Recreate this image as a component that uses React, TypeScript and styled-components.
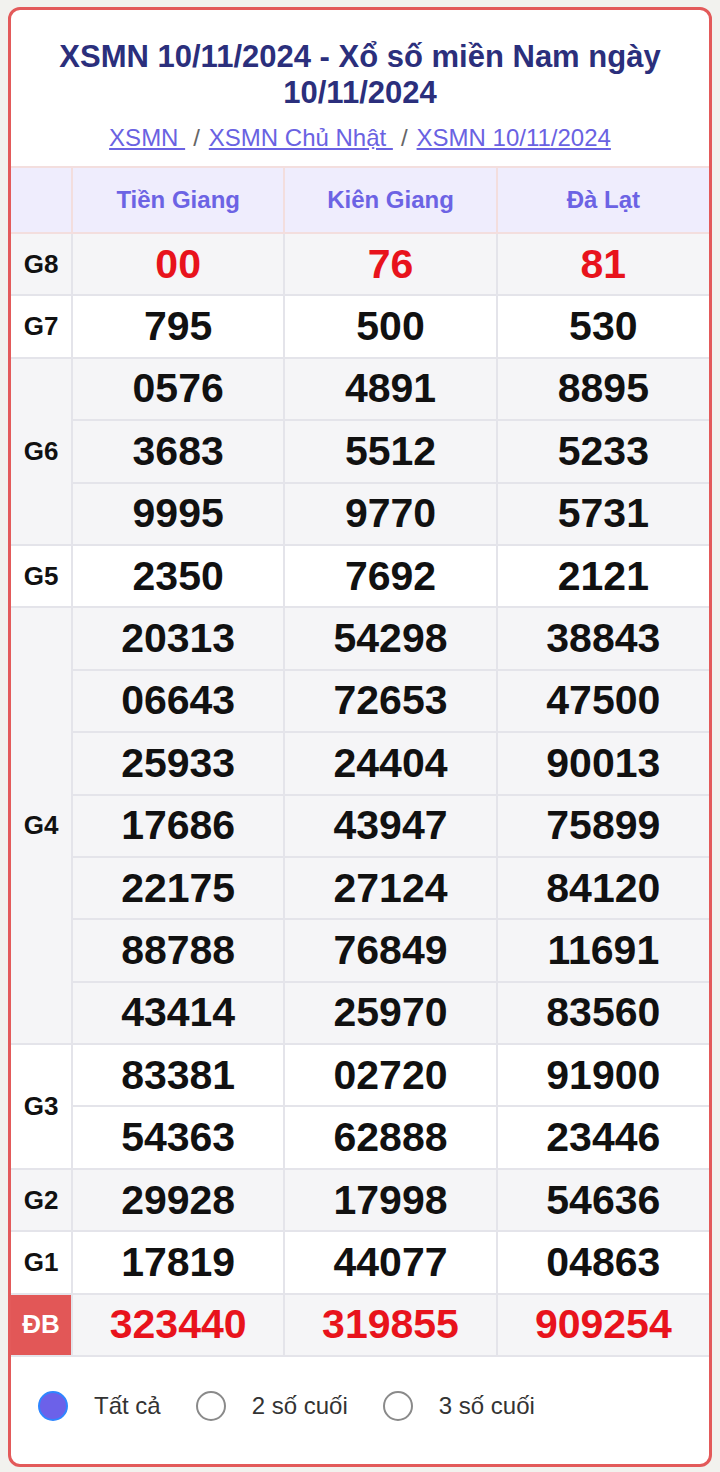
import React, { useState } from "react";
import styled, { createGlobalStyle } from "styled-components";

const Global = createGlobalStyle`
  html, body { margin: 0; padding: 0; background: #f2f2ee; }
  body { font-family: "Liberation Sans", Arial, sans-serif; }
  * { box-sizing: border-box; }
`;

const Card = styled.div`
  margin: 7px 8px 6px 8px;
  border: 3px solid #e35a5a;
  border-radius: 12px;
  background: #ffffff;
  overflow: hidden;
`;

const Head = styled.div`
  padding: 29px 20px 14px;
  text-align: center;
`;

const Title = styled.h1`
  margin: 0;
  font-size: 31px;
  line-height: 36px;
  font-weight: 700;
  color: #2b2f7c;
`;

const Crumbs = styled.div`
  margin-top: 13px;
  font-size: 24px;
  line-height: 28px;
  color: #555;
`;

const Crumb = styled.a`
  color: #6a62e2;
  text-decoration: underline;
`;

const Sep = styled.span`
  color: #666;
  margin: 0 9px 0 8px;
`;

const Table = styled.table`
  width: 100%;
  border-collapse: collapse;
  table-layout: fixed;
`;

const HeadCell = styled.th`
  height: 66px;
  background: #efedfd;
  border: 2px solid #f3dede;
  color: #6c63e4;
  font-size: 24px;
  font-weight: 700;
  text-align: center;
  &:first-child { border-left: none; }
  &:last-child { border-right: none; }
`;

const Row = styled.tr<{ $alt: boolean }>`
  background: ${(p) => (p.$alt ? "#f5f5f7" : "#ffffff")};
`;

const LabelCell = styled.td<{ $special?: boolean }>`
  border: 2px solid #e4e4ea;
  border-left: none;
  text-align: center;
  font-size: 26px;
  font-weight: 700;
  color: ${(p) => (p.$special ? "#ffffff" : "#111")};
  background: ${(p) => (p.$special ? "#e25757" : "transparent")};
`;

const NumCell = styled.td<{ $red?: boolean; $first: boolean; $last: boolean }>`
  height: 62.4px;
  padding: 0;
  border-left: 2px solid #e4e4ea;
  border-right: ${(p) => (p.$last ? "none" : "2px solid #e4e4ea")};
  border-top: 2px solid ${(p) => (p.$first ? "#e4e4ea" : "#ececf0")};
  border-bottom: 2px solid #e4e4ea;
  text-align: center;
  font-size: 41px;
  font-weight: 700;
  color: ${(p) => (p.$red ? "#e8131c" : "#111")};
`;

const Radios = styled.div`
  display: flex;
  align-items: center;
  padding: 34px 27px 43px;
`;

const RadioItem = styled.label`
  display: flex;
  align-items: center;
  gap: 26px;
  margin-right: 35px;
  font-size: 24px;
  color: #333;
  cursor: pointer;
`;

const Dot = styled.span<{ $on: boolean }>`
  width: 30px;
  height: 30px;
  border-radius: 50%;
  border: 2px solid ${(p) => (p.$on ? "#2f86ff" : "#8a8a8a")};
  background: ${(p) => (p.$on ? "#6c61e9" : "#fff")};
  flex-shrink: 0;
`;

type Prize = { label: string; rows: string[][]; red?: boolean; special?: boolean };

const prizes: Prize[] = [
  { label: "G8", rows: [["00", "76", "81"]], red: true },
  { label: "G7", rows: [["795", "500", "530"]] },
  {
    label: "G6",
    rows: [
      ["0576", "4891", "8895"],
      ["3683", "5512", "5233"],
      ["9995", "9770", "5731"],
    ],
  },
  { label: "G5", rows: [["2350", "7692", "2121"]] },
  {
    label: "G4",
    rows: [
      ["20313", "54298", "38843"],
      ["06643", "72653", "47500"],
      ["25933", "24404", "90013"],
      ["17686", "43947", "75899"],
      ["22175", "27124", "84120"],
      ["88788", "76849", "11691"],
      ["43414", "25970", "83560"],
    ],
  },
  {
    label: "G3",
    rows: [
      ["83381", "02720", "91900"],
      ["54363", "62888", "23446"],
    ],
  },
  { label: "G2", rows: [["29928", "17998", "54636"]] },
  { label: "G1", rows: [["17819", "44077", "04863"]] },
  { label: "ĐB", rows: [["323440", "319855", "909254"]], red: true, special: true },
];

const options = ["Tất cả", "2 số cuối", "3 số cuối"];

export default function App() {
  const [sel, setSel] = useState(0);
  return (
    <>
      <Global />
      <Card>
        <Head>
          <Title>XSMN 10/11/2024 - Xổ số miền Nam ngày 10/11/2024</Title>
          <Crumbs>
            <Crumb href="#">XSMN </Crumb>
            <Sep>/</Sep>
            <Crumb href="#">XSMN Chủ Nhật </Crumb>
            <Sep>/</Sep>
            <Crumb href="#">XSMN 10/11/2024</Crumb>
          </Crumbs>
        </Head>
        <Table>
          <colgroup>
            <col style={{ width: 61 }} />
            <col />
            <col />
            <col />
          </colgroup>
          <thead>
            <tr>
              <HeadCell />
              <HeadCell>Tiền Giang</HeadCell>
              <HeadCell>Kiên Giang</HeadCell>
              <HeadCell>Đà Lạt</HeadCell>
            </tr>
          </thead>
          <tbody>
            {prizes.map((p, pi) =>
              p.rows.map((r, ri) => (
                <Row key={p.label + ri} $alt={pi % 2 === 0}>
                  {ri === 0 && (
                    <LabelCell rowSpan={p.rows.length} $special={p.special}>
                      {p.label}
                    </LabelCell>
                  )}
                  {r.map((n, ci) => (
                    <NumCell key={ci} $red={p.red} $first={ri === 0} $last={ci === 2}>
                      {n}
                    </NumCell>
                  ))}
                </Row>
              ))
            )}
          </tbody>
        </Table>
        <Radios>
          {options.map((o, i) => (
            <RadioItem key={o} onClick={() => setSel(i)}>
              <Dot $on={sel === i} />
              {o}
            </RadioItem>
          ))}
        </Radios>
      </Card>
    </>
  );
}
